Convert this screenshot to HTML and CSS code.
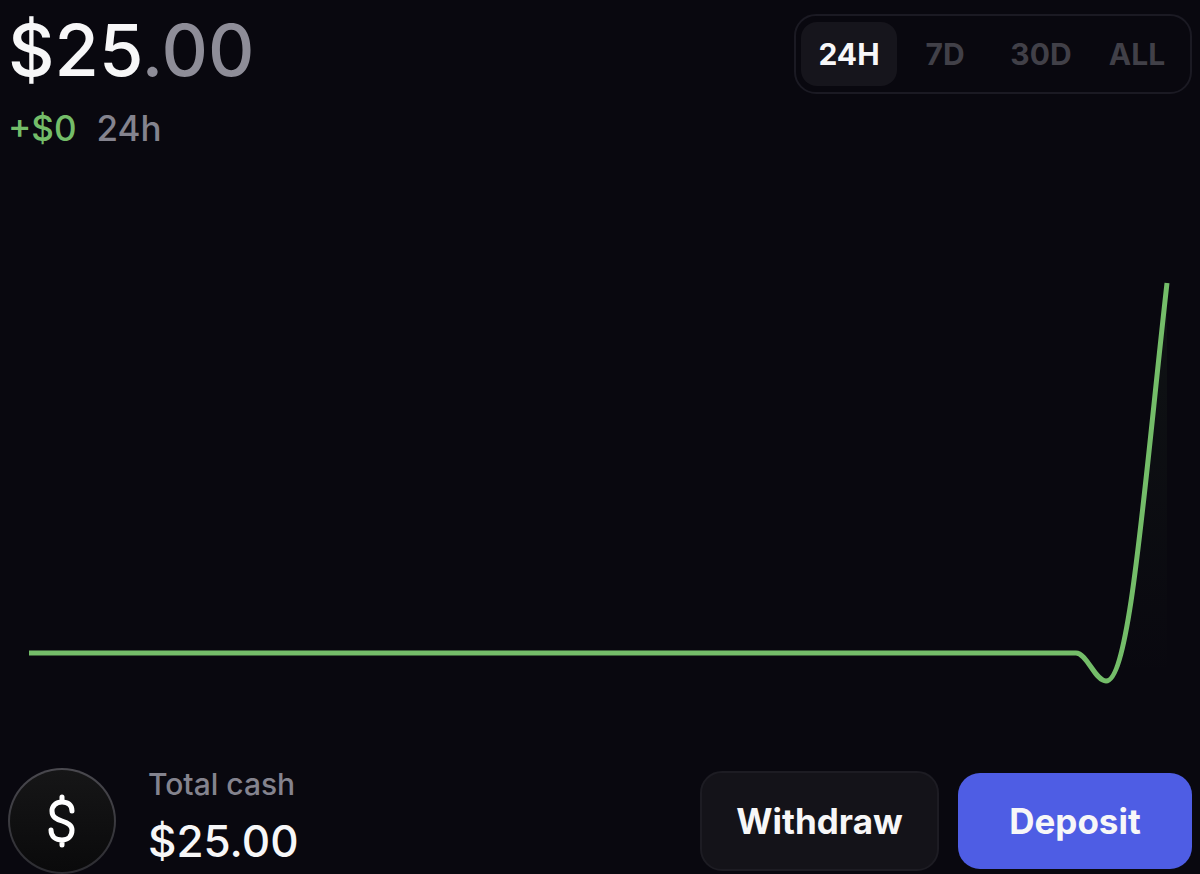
FILE: index.html
```html
<!DOCTYPE html>
<html lang="en">
<head>
    <meta charset="UTF-8">
    <meta name="viewport" content="width=device-width, initial-scale=1.0">
    <title>Portfolio</title>
    <link rel="stylesheet" href="styles.css">
</head>
<body>
    <header class="top">
        <div class="summary">
            <h1 class="balance">$25<span class="cents">.00</span></h1>
            <p class="change"><span class="gain">+$0</span><span>24h</span></p>
        </div>
        <nav class="ranges" aria-label="Time range">
            <button type="button" class="range active">24H</button>
            <button type="button" class="range">7D</button>
            <button type="button" class="range">30D</button>
            <button type="button" class="range">ALL</button>
        </nav>
    </header>
    <main class="chart">
        <svg class="plot" viewBox="0 0 1184 620" preserveAspectRatio="none" role="img" aria-label="Balance over the last 24 hours">
            <defs>
                <linearGradient id="fade" x1="0" y1="0" x2="0" y2="1">
                    <stop offset="0" stop-color="#74bd69" stop-opacity="0.06"/>
                    <stop offset="1" stop-color="#74bd69" stop-opacity="0"/>
                </linearGradient>
            </defs>
            <path class="area" d="M1098 533C1122 533 1136 340 1159 135V533Z"/>
            <path class="line" d="M21 505H1068C1079 505 1087 533 1098 533C1122 533 1136 340 1159 135"/>
        </svg>
    </main>
    <footer class="bottom">
        <div class="cash">
            <div class="coin">
                <svg class="dollar" viewBox="0 0 28 54" aria-hidden="true">
                    <path d="M14 3V8M14 46V51M24 17C24 11 20 8 14 8C8 8 4 12 4 17C4 23 8 25 14 27C20 29 24 31 24 36C24 42 20 46 14 46C8 46 3 43 3 36"/>
                </svg>
            </div>
            <div class="total">
                <p class="label">Total cash</p>
                <p class="amount">$25.00</p>
            </div>
        </div>
        <div class="actions">
            <button type="button" class="action withdraw">Withdraw</button>
            <button type="button" class="action deposit">Deposit</button>
        </div>
    </footer>
</body>
</html>
```
FILE: styles.css
```css
* {
    box-sizing: border-box;
}
body {
    display: flex;
    flex-direction: column;
    min-height: 100vh;
    margin: 0;
    padding: 14px 8px 0;
    background-color: #09080f;
    color: #f7f7f8;
    font-family: Inter, "Liberation Sans", sans-serif;
}
h1, p {
    margin: 0;
}
button {
    padding: 0;
    border: 0;
    color: inherit;
    font-family: inherit;
    cursor: pointer;
}
.top, .bottom {
    display: flex;
    justify-content: space-between;
}
.top {
    align-items: flex-start;
}
.balance {
    font-size: 72px;
    font-weight: 500;
    line-height: 72px;
}
.cents {
    color: #8e8d98;
}
.change {
    display: flex;
    gap: 20px;
    margin-top: 22px;
    color: #84838e;
    font-size: 35px;
    font-weight: 500;
    line-height: 40px;
}
.gain {
    color: #74bd69;
}
.ranges {
    display: flex;
    padding: 6px 5px;
    border: 2px solid #1b1a23;
    border-radius: 22px;
}
.range {
    width: 96px;
    height: 64px;
    border-radius: 16px;
    background: none;
    color: #414048;
    font-size: 30px;
    font-weight: 700;
}
.range.active {
    background-color: #16151c;
    color: #f7f7f8;
}
.chart {
    display: flex;
    flex: 1;
    min-height: 300px;
}
.plot {
    flex: 1;
    width: 100%;
    height: auto;
}
.line {
    fill: none;
    stroke: #74bd69;
    stroke-width: 5;
    vector-effect: non-scaling-stroke;
}
.area {
    fill: url(#fade);
}
.bottom {
    align-items: center;
}
.cash {
    display: flex;
    gap: 32px;
}
.coin {
    display: flex;
    align-items: center;
    justify-content: center;
    width: 108px;
    height: 106px;
    border: 2px solid transparent;
    border-radius: 50%;
    background: linear-gradient(#161617, #0a0a0b) padding-box, linear-gradient(#4a494f, #2c2c31) border-box;
}
.dollar {
    width: 28px;
    height: 54px;
    fill: none;
    stroke: #fff;
    stroke-width: 5;
    stroke-linecap: round;
}
.label {
    color: #84838e;
    font-size: 30px;
    font-weight: 500;
    line-height: 32px;
}
.amount {
    margin-top: 12px;
    font-size: 44px;
    font-weight: 500;
    line-height: 58px;
}
.actions {
    display: flex;
    align-items: center;
    gap: 19px;
}
.action {
    border-radius: 22px;
    font-size: 35px;
    font-weight: 700;
}
.withdraw {
    width: 239px;
    height: 100px;
    border: 2px solid #1d1c23;
    background-color: #141319;
}
.deposit {
    width: 234px;
    height: 96px;
    background-color: #4e5de4;
}
```
